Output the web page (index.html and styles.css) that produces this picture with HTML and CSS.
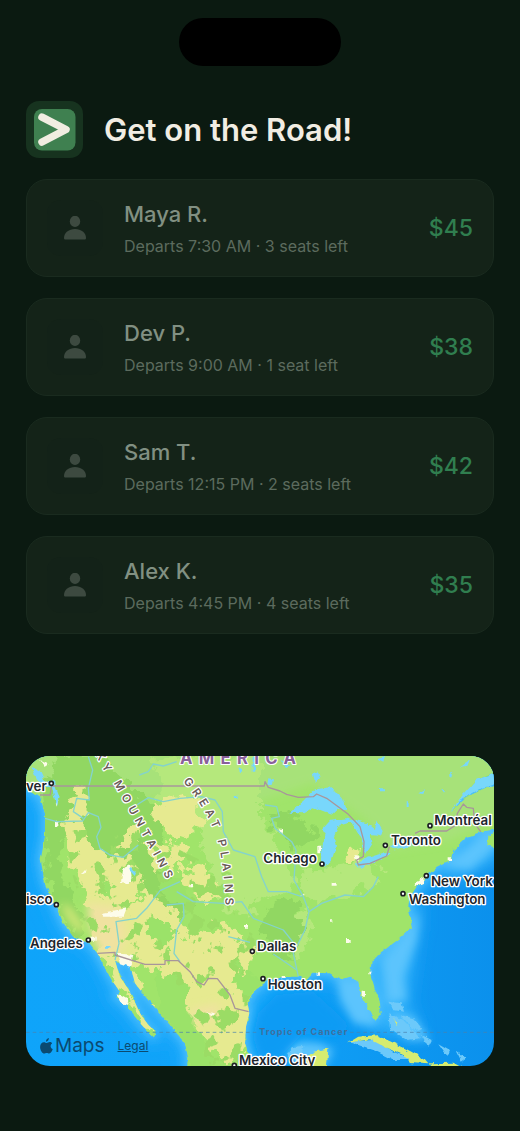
FILE: index.html
```html
<!DOCTYPE html>
<html lang="en">
<head>
<meta charset="utf-8">
<meta name="viewport" content="width=device-width, initial-scale=1">
<title>Get on the Road!</title>
<link rel="stylesheet" href="styles.css">
</head>
<body>
<svg class="defs" aria-hidden="true">
  <symbol id="person" viewBox="0 0 24 24">
    <ellipse cx="12" cy="5.4" rx="5.2" ry="5.6"/>
    <path d="M1 22C1 16.500 6 13 12 13s11 3.500 11 9c0 1-.6 1.500-1.700 1.500H2.700C1.600 23.500 1 23 1 22z"/>
  </symbol>
</svg>
<main class="screen">
  <div class="island"></div>
  <header class="header">
    <svg class="logo" viewBox="0 0 57 57" aria-hidden="true">
      <rect class="logo-outer" width="57" height="57" rx="13"/>
      <rect class="logo-inner" x="8" y="8" width="41.500" height="41.500" rx="8"/>
      <path class="logo-mark" d="M16 16.200 40 28.500 16 41"/>
    </svg>
    <h1 class="title">Get on the Road!</h1>
  </header>

  <ul class="rides">
    <li class="ride">
      <span class="avatar"><svg class="person" aria-hidden="true"><use href="#person"/></svg></span>
      <div class="info"><h2 class="name">Maya R.</h2><p class="detail">Departs 7:30 AM · 3 seats left</p></div>
      <span class="price">$45</span>
    </li>
    <li class="ride">
      <span class="avatar"><svg class="person" aria-hidden="true"><use href="#person"/></svg></span>
      <div class="info"><h2 class="name">Dev P.</h2><p class="detail">Departs 9:00 AM · 1 seat left</p></div>
      <span class="price">$38</span>
    </li>
    <li class="ride">
      <span class="avatar"><svg class="person" aria-hidden="true"><use href="#person"/></svg></span>
      <div class="info"><h2 class="name">Sam T.</h2><p class="detail">Departs 12:15 PM · 2 seats left</p></div>
      <span class="price">$42</span>
    </li>
    <li class="ride">
      <span class="avatar"><svg class="person" aria-hidden="true"><use href="#person"/></svg></span>
      <div class="info"><h2 class="name">Alex K.</h2><p class="detail">Departs 4:45 PM · 4 seats left</p></div>
      <span class="price">$35</span>
    </li>
  </ul>

  <section class="map" aria-label="Map">
    <svg class="map-art" viewBox="18 18 1404 930" preserveAspectRatio="xMidYMid slice">
      <defs>
        <linearGradient id="sea" x1="0" x2="1" y1="0" y2="0">
          <stop offset="0" stop-color="#0fa4fa"/><stop offset=".5" stop-color="#10a2f8"/><stop offset="1" stop-color="#0b90ec"/>
        </linearGradient>
        <filter id="soft" x="-20%" y="-20%" width="140%" height="140%"><feGaussianBlur stdDeviation="12"/></filter>
        <filter id="haze" x="-20%" y="-20%" width="140%" height="140%"><feGaussianBlur stdDeviation="26"/></filter>
        <filter id="coast" x="-5%" y="-5%" width="110%" height="110%">
          <feTurbulence type="fractalNoise" baseFrequency=".06" numOctaves="2" seed="4"/>
          <feDisplacementMap in="SourceGraphic" scale="14" xChannelSelector="R" yChannelSelector="G"/>
        </filter>
        <filter id="rough" x="-10%" y="-10%" width="120%" height="120%">
          <feTurbulence type="fractalNoise" baseFrequency=".025" numOctaves="4" seed="8"/>
          <feDisplacementMap in="SourceGraphic" scale="80" xChannelSelector="R" yChannelSelector="G"/>
        </filter>
        <filter id="patch" x="0" y="0" width="100%" height="100%">
          <feTurbulence type="fractalNoise" baseFrequency=".022 .018" numOctaves="4" seed="12"/>
          <feColorMatrix values="0 0 0 0 0  0 0 0 0 0  0 0 0 0 0  24 0 0 0 -14.200" result="n"/>
          <feComposite in="SourceGraphic" in2="n" operator="in"/>
        </filter>
        <path id="landShape" d="M18 0H1440V60L1370 90 1320 150 1290 190 1340 142 1400 112 1440 108V235L1380 246 1340 262 1300 300 1292 330 1250 350 1230 370 1205 400 1190 410 1170 440 1165 470 1172 500 1178 530 1140 565 1080 610 1055 635 1050 670 1065 720 1080 760 1082 795 1066 812 1045 775 1025 740 1015 695 990 680 960 690 930 670 880 668 860 690 840 680 790 680 745 690 700 725 682 755 688 790 678 830 675 880 690 930 740 960H500L505 925 495 880 450 825 420 790 380 745 345 700 330 645 285 632 300 680 330 725 360 790 385 825 407 845 400 860 370 830 345 800 320 765 285 740 300 725 275 690 250 645 232 610 205 575 160 560 130 520 110 470 75 400 62 330 75 260 75 190 60 140 18 110Z"/>
        <clipPath id="landClip"><use href="#landShape"/></clipPath>
        <path id="rockies" d="M235 8 263 57 300 112 345 192 385 265 420 328 485 450"/>
        <path id="plains" d="M497 88C545 140 588 215 603 270S628 400 628 520"/>
      </defs>
      <rect x="0" y="0" width="1440" height="970" fill="url(#sea)"/>

      <g class="shelf" filter="url(#haze)">
        <use href="#landShape" class="shelf-wide"/>
        <path d="M1250 360 1440 225V330L1290 395ZM1050 600 1200 450 1180 620 1160 760 1200 850 1080 850Z"/>
      </g>
      <g class="shelf-near" filter="url(#soft)">
        <use href="#landShape" class="shelf-line"/>
        <path d="M950 690 1020 690 1070 830 1000 820 960 750ZM1085 630 1175 530 1200 480 1190 570 1150 680 1160 750 1100 760ZM795 910 820 875 900 880 940 900 910 960H840Z"/>
        <path d="M1110 790 1180 800 1230 870 1160 870ZM1270 350 1390 250 1440 240V280L1350 360Z"/>
      </g>
      <path class="deep" filter="url(#soft)" d="M715 790 770 735 880 725 940 780 990 830 940 865 850 850 780 920 720 930 700 860Z"/>
      <g class="bahamas" filter="url(#coast)">
        <path d="M1105 755 1145 760 1152 785 1120 780ZM1105 790 1150 810 1200 865 1160 870 1110 835ZM1140 795 1180 805 1210 840 1190 845ZM1205 855 1235 870 1225 890ZM1255 880 1290 900 1282 918ZM1310 905 1340 925 1325 935Z"/>
        <path d="M985 875 1060 870 1120 905 1180 930 1120 930 1060 900ZM800 920 815 892 850 888 842 930Z"/>
      </g>

      <g filter="url(#coast)">
        <use href="#landShape" fill="#a0e46b"/>
        <path fill="#a0e46b" d="M1440 235 1405 260 1402 285 1440 298Z"/>
        <path fill="#d6ec70" d="M838 960 850 925 885 905 925 894 920 960ZM985 878 1015 860 1070 856 1110 874 1155 895 1215 928 1225 940 1170 936 1150 915 1100 894 1050 868ZM1230 940 1300 938 1330 955H1235ZM1123 805 1133 820 1130 825Z"/>
      </g>
      <g clip-path="url(#landClip)">
        <path fill="#a7e279" filter="url(#soft)" d="M0 0H1440V200L1290 270 1100 300 1050 220 880 100 700 160 0 130Z"/>
        <path fill="#b5e87c" filter="url(#rough)" d="M390 10H720V200L790 300 830 400 780 440 730 430 690 500 600 470 540 260 430 170ZM840 370 940 350 1060 330 1090 390 960 450 860 460ZM840 490 880 500 850 620 820 630Z"/>
        <path fill="#91d762" filter="url(#rough)" d="M110 18 220 0 420 190 430 400 520 470 460 510 370 420 230 310 170 200 110 300 190 540 170 590 80 400 60 130ZM740 470 830 440 850 520 810 620 720 600ZM740 180 850 200 900 260 830 290 750 230Z"/>
        <g class="dry" filter="url(#rough)">
          <path d="M165 110 200 130 190 240 250 310 340 330 370 420 330 480 380 430 480 490 490 560 600 520 700 590 680 700 720 790 700 880 620 940 560 880 500 760 440 670 330 640 420 830 390 850 230 610 230 510 160 350 140 230Z"/>
          <path d="M400 160 520 130 550 220 470 270 390 220ZM370 270 520 290 500 340 400 360ZM480 350 560 360 620 440 560 460 490 400ZM300 260 355 225 365 270 310 300ZM980 300 1010 298 1008 335 980 330Z"/>
        </g>
        <path class="arid" filter="url(#soft)" d="M200 460 300 470 320 560 290 620 230 600 210 530ZM510 780 600 760 590 810 520 820Z"/>
        <path fill="#9bdc65" filter="url(#patch)" d="M140 240 360 240 520 320 660 380 720 620 720 948H500L470 800 330 620 230 620 150 350Z"/>
        <path fill="#9be269" filter="url(#rough)" d="M370 500 440 510 470 570 440 600 380 560ZM410 660 500 700 510 810 550 870 560 950H500L430 800ZM640 650 700 680 710 740 650 730ZM420 400 490 370 500 460 440 450ZM245 400 275 405 260 440 240 430Z"/>
        <path fill="#d3e878" filter="url(#soft)" d="M122 460 150 470 195 535 180 550 145 510Z"/>
      </g>

      <g class="salt" filter="url(#coast)">
        <path d="M310 355 330 345 335 380 325 405 303 395ZM185 375 200 358 197 370ZM240 490 320 475 310 500 250 500ZM290 610 340 615 330 650 300 640ZM290 730 325 750 320 765 300 755ZM555 785 585 790 580 797ZM1185 400 1215 380 1210 398 1180 412ZM1002 315 1022 318 1012 340ZM60 30 82 40 78 52ZM104 145 115 150 110 170Z"/>
        <path d="M105 215h10v16h-10zM935 398h12v9h-12zM978 567h14v12h-14zM508 402h8v10h-8zM930 508h7v7h-7zM845 433h8v8h-8zM672 525h12v8h-12zM1028 725h7v15h-7zM1048 665h6v8h-6zM1283 322h10v9h-10zM775 236h14v12h-14zM895 290h8v20h-8zM890 667h10v10h-10zM785 678h12v8h-12zM210 560h20v12h-20z"/>
      </g>
      <g class="lakes" filter="url(#coast)">
        <path d="M808 188 850 155 885 118 935 112 965 145 980 180 955 177 940 192 915 185 880 172 850 190ZM905 240 930 212 985 203 1005 213 955 228 942 260 948 290 935 330 915 350 903 330 905 285 917 250ZM990 205 1040 220 1065 240 1070 210 1088 240 1084 258 1050 255 1055 280 1035 312 1025 270 1005 235ZM1008 340 1040 325 1100 305 1112 312 1070 335 1020 354ZM1108 290 1140 275 1190 270 1170 290 1120 298Z"/>
        <path d="M878 70 895 64 900 85 885 95ZM745 85 762 88 758 108 742 104ZM698 20h8v45h-8zM655 50 672 62 660 66ZM780 28 810 50 800 54ZM1070 25 1095 18 1090 35ZM1080 115h15v9h-15zM1192 130 1215 118 1210 132ZM1160 157h6v14h-6zM1262 118 1278 126 1274 133ZM1290 65 1300 75 1292 80ZM1320 50 1350 28 1342 48ZM332 350 348 370 344 378 328 360ZM258 585h10v8h-10zM642 137h14v7h-14z"/>
        <path d="M1290 190 1320 145 1370 90 1440 62V98L1385 115 1330 145Z"/>
        <path d="M34 52 62 66 74 92 100 92 116 135 112 168 102 140 96 112 70 110 50 88Z"/>
      </g>
      <g class="rivers">
        <path d="M75 205 110 215 188 213 205 188 235 200 243 232 230 260 240 295 270 315 310 322 355 285M205 20 218 60 205 115 208 150 170 145 160 185 190 205"/>
        <path d="M350 165 385 143 430 155 480 145 545 140 585 150 607 185 610 245 640 300 705 320 725 380 745 425 800 425 845 440M735 165 770 170 778 200 755 205 765 235 815 275 828 300 822 390 850 440 867 485 855 540 820 610 835 680M867 485 905 460 975 435 1030 440 1060 410 1075 380"/>
        <path d="M480 395 420 422 380 475 350 505 288 515 297 580 285 630M440 465 490 460 492 500 470 540 462 610 480 635M470 425 520 455 610 460 665 455 700 505 790 540 822 580M625 560 690 577M760 612 830 660M358 75 385 65 400 42 430 48 470 35"/>
      </g>
      <g class="borders">
        <path d="M60 135 90 135 95 108H733L735 95 745 112 780 123 800 133 835 142 880 140 890 132 920 145 985 193 1020 230 1032 275 1030 320 1010 330 1015 345 1050 340 1100 318 1108 290M1185 250 1200 243 1280 243 1308 225 1312 190 1330 162 1340 172 1360 175 1364 220 1382 245"/>
        <path d="M232 610 285 607 285 615 375 643H435V632H475L510 665 530 695 552 705 565 685 592 686 630 735 645 775 686 785"/>
      </g>
      <path class="tropic" d="M18 847H718M990 847H1422"/>

      <g class="places">
        <text x="18" y="123">ver</text><text x="18" y="463">isco</text><text x="30" y="595">Angeles</text>
        <text x="730" y="340">Chicago</text><text x="1243" y="224">Montréal</text><text x="1113" y="284">Toronto</text>
        <text x="1233" y="409">New York</text><text x="1166" y="463">Washington</text><text x="711" y="602">Dallas</text>
        <text x="743" y="717">Houston</text><text x="657" y="945">Mexico City</text>
      </g>
      <text class="country" x="480" y="43">AMERICA</text>
      <text class="range" dy="11"><textPath href="#rockies">KY MOUNTAINS</textPath></text>
      <text class="range" dy="11"><textPath href="#plains">GREAT PLAINS</textPath></text>
      <text class="tropic-label" x="718" y="856">Tropic of Cancer</text>
      <g class="dots">
        <circle cx="94" cy="100" r="6"/><circle cx="109" cy="464" r="6"/><circle cx="205" cy="570" r="6"/>
        <circle cx="906" cy="342" r="6"/><circle cx="1230" cy="227" r="6"/><circle cx="1096" cy="286" r="6"/>
        <circle cx="1219" cy="377" r="6"/><circle cx="1149" cy="431" r="6"/><circle cx="697" cy="604" r="6"/>
        <circle cx="729" cy="686" r="6"/><circle cx="643" cy="946" r="6"/>
      </g>
    </svg>
    <div class="credit">
      <span class="brand">
        <svg class="apple" viewBox="0 0 24 30" aria-hidden="true"><path d="M16.500 0c.2 3.600-2.300 6.600-5.500 6.900C10.700 3.500 13.400.4 16.500 0zM22.600 10.200c-4.300 2.600-3.600 8.700 1.200 10.600-1.200 3.500-3.900 8.400-6.800 8.400-1.800 0-2.400-1.100-4.600-1.100s-2.900 1.100-4.600 1.100C4.200 29.200 0 22.600 0 16.700 0 11 3.600 7.800 7.200 7.800c2.200 0 3.900 1.400 5.300 1.400 1.300 0 3.300-1.500 5.800-1.500 1.700 0 3.300.8 4.300 2.500z"/></svg>
        <span>Maps</span>
      </span>
      <a class="legal" href="#legal">Legal</a>
    </div>
  </section>
</main>
</body>
</html>
```
FILE: styles.css
```css
* { box-sizing: border-box; }

body {
  margin: 0;
  background: #0b1a11;
  color: #f1ede3;
  font-family: Inter, "Liberation Sans", sans-serif;
}

.defs { position: absolute; width: 0; height: 0; }

.screen {
  display: flex;
  flex-direction: column;
  min-height: 100vh;
  padding: 18px 26px 65px;
}

.island {
  align-self: center;
  width: 162px;
  height: 48px;
  border-radius: 24px;
  background: #000;
}

.header {
  display: flex;
  align-items: center;
  gap: 21px;
  margin: 35px 0 21px;
}
.logo { width: 57px; height: 57px; }
.logo-outer { fill: #17331f; }
.logo-inner { fill: #3f8050; }
.logo-mark {
  fill: none;
  stroke: #f1ede1;
  stroke-width: 7.5;
  stroke-linecap: round;
  stroke-linejoin: round;
}
.title { margin: 0; font-size: 31px; line-height: 36px; font-weight: 600; }

.rides {
  display: flex;
  flex-direction: column;
  gap: 21px;
  margin: 0 0 21px;
  padding: 0;
  list-style: none;
}
.ride {
  display: flex;
  align-items: center;
  gap: 21px;
  padding: 20px;
  border: 1px solid #1a2b1f;
  border-radius: 21px;
  background: #142318;
}
.avatar {
  display: grid;
  place-items: center;
  width: 56px;
  height: 56px;
  border-radius: 14px;
  background: #132218;
}
.person { width: 24px; height: 24px; fill: #3d4a40; }
.info { flex: 1; display: flex; flex-direction: column; gap: 8px; }
.name { margin: 0; color: #819082; font-size: 22px; line-height: 28px; font-weight: 500; }
.detail { margin: 0; color: #5c6b5e; font-size: 16px; line-height: 20px; }
.price { color: #307e4f; font-size: 23px; line-height: 28px; font-weight: 500; }

.map {
  position: relative;
  margin-top: auto;
  overflow: hidden;
  border-radius: 24px;
}
.map-art { display: block; width: 100%; height: auto; }
.shelf { fill: #35b4fb; }
.shelf-wide { stroke: #25acfb; stroke-width: 40; }
.shelf-near { fill: #5cc4fd; }
.shelf-line { stroke: #45bbfc; stroke-width: 18; }
.deep { fill: #0d9bf4; }
.bahamas { fill: #6cc9fa; }
.dry { fill: #e6ea90; }
.arid { fill: #f0e2a0; }
.salt { fill: #fdfcea; }
.lakes { fill: #78d7fb; }
.rivers { fill: none; stroke: #84d3cc; stroke-width: 4; stroke-linejoin: round; }
.borders { fill: none; stroke: #a8969a; stroke-width: 4; stroke-linejoin: round; }
.tropic { stroke: #4a83ad; stroke-width: 3; stroke-dasharray: 11 9; opacity: .7; }

.places, .country, .range { stroke: #fff; stroke-linejoin: round; paint-order: stroke; }
.places { fill: #20252c; stroke-width: 8; font-size: 40px; font-weight: 600; }
.country { fill: #89609a; stroke-width: 6; font-size: 50px; font-weight: 700; letter-spacing: 19px; }
.range { fill: #6b5c58; stroke-width: 7; font-size: 34px; font-weight: 600; letter-spacing: 15px; }
.tropic-label { fill: #3e6f9e; font-size: 27px; font-weight: 700; letter-spacing: 3px; }
.dots { fill: #fff; stroke: #1c1f22; stroke-width: 5; }

.credit {
  position: absolute;
  left: 14px;
  bottom: 8px;
  display: flex;
  align-items: center;
  gap: 13px;
  color: #0b4a70;
}
.brand { display: flex; align-items: center; gap: 2px; font-size: 19px; line-height: 24px; }
.apple { width: 13px; height: 16px; fill: currentColor; }
.legal { color: inherit; font-size: 12px; line-height: 20px; }
```
